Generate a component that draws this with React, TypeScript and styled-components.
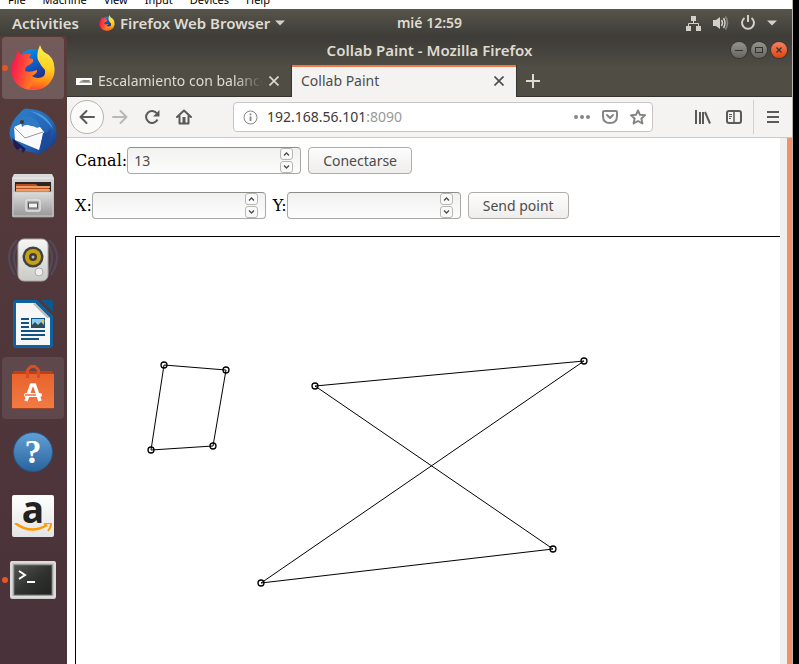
import React from "react";
import styled, { createGlobalStyle, css } from "styled-components";

const GlobalStyle = createGlobalStyle`
  * { box-sizing: border-box; }
  body { margin: 0; background: #000; }
  button, input { font: inherit; color: inherit; margin: 0; }
  button { padding: 0; border: 0; background: none; }
  svg { display: block; flex: none; }
`;

const Screen = styled.div`
  height: 100vh;
  margin-right: 6px;
  border-right: 1px solid #b9b6b2;
  display: flex;
  flex-direction: column;
  overflow: hidden;
  background: #fff;
  font: 14px/18px "Noto Sans", "Open Sans", sans-serif;
`;

const HostMenu = styled.nav`
  flex: none;
  height: 9px;
  padding-left: 8px;
  display: flex;
  align-items: flex-end;
  gap: 17px;
  overflow: hidden;
  background: #fff;
  color: #000;
  font: 11px/18px "Noto Sans", "Open Sans", sans-serif;
`;

const HostItem = styled.button`
  flex: none;
`;

const TopBar = styled.header`
  flex: none;
  height: 27px;
  padding: 0 15px 0 12px;
  display: grid;
  grid-template-columns: 11fr auto 9fr;
  align-items: center;
  background: linear-gradient(#57544b, #3e3d38);
  color: #dfdbd2;
  font-weight: 600;
`;

const TopGroup = styled.div<{ $end?: boolean }>`
  display: flex;
  align-items: center;
  gap: ${(p) => (p.$end ? "11px" : "20px")};
  justify-content: ${(p) => (p.$end ? "flex-end" : "flex-start")};
  font-size: 15px;
`;

const TopButton = styled.button`
  display: flex;
  align-items: center;
  gap: 5px;
  white-space: nowrap;
`;

const Desktop = styled.div`
  flex: 1;
  min-height: 0;
  display: flex;
`;

const Dock = styled.nav`
  flex: none;
  width: 67px;
  padding: 1px 3px 0 2px;
  display: flex;
  flex-direction: column;
  gap: 2px;
  background: linear-gradient(#573c3a, #50373b 45%, #49323a);
`;

const DockTile = styled.button<{ $shade?: number }>`
  flex: none;
  height: 62px;
  border-radius: 4px;
  display: grid;
  place-items: center;
  position: relative;
  background: rgba(255, 255, 255, ${(p) => p.$shade ?? 0});
`;

const RunningDot = styled.span`
  position: absolute;
  left: 0;
  top: 28px;
  width: 6px;
  height: 6px;
  border-radius: 50%;
  background: #e95420;
`;

const Window = styled.main`
  flex: 1;
  min-width: 0;
  display: flex;
  flex-direction: column;
`;

const Chrome = styled.div`
  flex: none;
  background: linear-gradient(#3d3b37, #504d45 32px);
  color: #dfdbd2;
`;

const TitleBar = styled.div`
  height: 29px;
  padding: 0 5px 2px 61px;
  display: flex;
  align-items: center;
`;

const WindowTitle = styled.h1`
  flex: 1;
  margin: 0;
  text-align: center;
  font-size: 15px;
  line-height: 18px;
  font-weight: 600;
`;

const WindowButtons = styled.div`
  display: flex;
  gap: 4px;
`;

const RoundButton = styled.button<{ $close?: boolean }>`
  width: 16px;
  height: 16px;
  border-radius: 50%;
  display: grid;
  place-items: center;
  color: #35332e;
  box-shadow: 0 0 0 1px #383630;
  background: ${(p) =>
    p.$close ? "linear-gradient(#f58163, #e1440f)" : "linear-gradient(#95938c, #666560)"};
`;

const TabStrip = styled.div`
  height: 32px;
  display: flex;
`;

const Tab = styled.div<{ $active?: boolean }>`
  flex: none;
  width: ${(p) => (p.$active ? "226px" : "224px")};
  display: flex;
  align-items: center;
  gap: 6px;
  padding: 0 12px 0 9px;
  border-bottom: 1px solid #35332e;
  ${(p) =>
    p.$active &&
    css`
      border-bottom: 0;
      border-left: 1px solid #35332e;
      border-right: 1px solid #35332e;
      box-shadow: inset 0 2px #f07746;
      background: #f4f3f2;
      color: #4c4c4c;
    `}
`;

const TabLabel = styled.span<{ $fade?: boolean }>`
  flex: 1;
  min-width: 0;
  overflow: hidden;
  white-space: nowrap;
  ${(p) =>
    p.$fade &&
    css`
      mask-image: linear-gradient(to left, transparent 0, #000 28px);
    `}
`;

const StripRest = styled.div`
  flex: 1;
  display: flex;
  align-items: center;
  padding-left: 9px;
  border-bottom: 1px solid #35332e;
`;

const Toolbar = styled.div`
  flex: none;
  height: 41px;
  display: flex;
  align-items: center;
  padding: 0 13px 0 3px;
  background: #f4f3f2;
  border-bottom: 1px solid #cbc8c5;
  color: #5a5a58;
`;

const ToolGroup = styled.div<{ $gap: number }>`
  flex: none;
  display: flex;
  align-items: center;
  gap: ${(p) => p.$gap}px;
`;

const ToolButton = styled.button<{ $round?: boolean; $dim?: boolean }>`
  display: grid;
  place-items: center;
  ${(p) =>
    p.$round &&
    css`
      width: 34px;
      height: 34px;
      border-radius: 50%;
      border: 1px solid #b5b2af;
      background: #fbfbfa;
    `}
  ${(p) =>
    p.$dim &&
    css`
      color: #b9b8b6;
    `}
`;

const UrlBar = styled.div`
  flex: 1;
  min-width: 0;
  height: 30px;
  margin: 0 42px 0 41px;
  padding: 0 6px 0 9px;
  display: flex;
  align-items: center;
  gap: 9px;
  border: 1px solid #c8c5c2;
  border-radius: 4px;
  background: #fff;
  color: #858583;
`;

const Address = styled.div`
  flex: 1;
  min-width: 0;
  color: #9a9996;
`;

const Host = styled.span`
  color: #3a3a3a;
`;

const MenuDivider = styled.span`
  width: 1px;
  height: 34px;
  margin: 0 13px 0 11px;
  background: #d2d0ce;
`;

const Viewport = styled.div`
  flex: 1;
  min-height: 0;
  display: flex;
  background: #fff;
`;

const Page = styled.div`
  flex: 1;
  min-width: 0;
  overflow: hidden;
  padding: 9px 0 0 8px;
  color: #000;
  font: 16px/19px "DejaVu Serif", serif;
`;

const ScrollTrack = styled.div`
  flex: none;
  width: 12px;
  background: #f1f0ef;
  border-right: 5px solid #f19169;
`;

const FormRow = styled.form`
  display: flex;
  align-items: center;
  margin-bottom: 17px;
  & + & { margin-top: 18px; }
`;

const Field = styled.label`
  display: flex;
  align-items: center;
  margin-right: 7px;
`;

const Spin = styled.span`
  width: 174px;
  height: 27px;
  padding: 0 7px 0 6px;
  display: flex;
  align-items: center;
  border: 1px solid #aaa8a5;
  border-top-color: #8f8d8a;
  border-radius: 4px;
  background: linear-gradient(#f1f1f0, #fdfdfd);
`;

const NumberInput = styled.input`
  flex: 1;
  min-width: 0;
  padding: 0;
  border: 0;
  outline: 0;
  background: none;
  color: #4c4c4c;
  font: 14px/18px "Noto Sans", sans-serif;
  appearance: textfield;
  &::-webkit-inner-spin-button { appearance: none; }
`;

const Steppers = styled.span`
  display: flex;
  flex-direction: column;
  gap: 1px;
`;

const StepButton = styled.button`
  width: 13px;
  height: 12px;
  display: grid;
  place-items: center;
  border: 1px solid #b9b7b4;
  border-radius: 3px;
  background: #fafafa;
  color: #4c4c4c;
`;

const PushButton = styled.button`
  height: 27px;
  padding: 0 14px;
  border: 1px solid #b0adaa;
  border-radius: 4px;
  background: linear-gradient(#fdfdfd, #eeedeb);
  color: #4c4c4c;
  font: 14px/18px "Noto Sans", sans-serif;
`;

const Drawing = styled.svg`
  border: 1px solid #000;
`;

function FirefoxIcon({ size }: { size: number }) {
  const id = "fx" + size;
  return (
    <svg width={size} height={size} viewBox="0 0 46 46" aria-hidden="true">
      <defs>
        <linearGradient id={id + "a"} x1="0" y1="0.3" x2="1" y2="0.5">
          <stop offset="0" stopColor="#f5144f" />
          <stop offset="0.25" stopColor="#ff3b3f" />
          <stop offset="0.55" stopColor="#ff7a22" />
          <stop offset="1" stopColor="#ffbd16" />
        </linearGradient>
        <linearGradient id={id + "b"} x1="0" y1="0" x2="0.5" y2="1">
          <stop offset="0" stopColor="#00a7ee" />
          <stop offset="0.5" stopColor="#0b5fd0" />
          <stop offset="1" stopColor="#2c2178" />
        </linearGradient>
        <linearGradient id={id + "c"} x1="0.4" y1="0" x2="0.3" y2="1">
          <stop offset="0" stopColor="#fff14a" />
          <stop offset="0.5" stopColor="#ffce20" />
          <stop offset="0.8" stopColor="#ff8b14" />
          <stop offset="1" stopColor="#ff4a30" />
        </linearGradient>
      </defs>
      <circle cx="24" cy="22" r="18" fill={`url(#${id}b)`} />
      <path
        d="M7 5 L11 10 Q16 8 21 9 L19 13 L23 14 L23 17 Q20 20 17 21 Q15 23 15 26 Q20 28 27 25 Q28 28 22 31 Q28 35 34 31 Q38 24 34 17 Q42 22 44 27 Q41 43 24 45 Q5 45 1 27 Q1 17 6 12 Z"
        fill={`url(#${id}a)`}
      />
      <path
        d="M30 0 Q26 9 28 15 Q31 21 35 25 Q36 34 28 36 Q22 38 19 44.500 Q38 47 44 30 Q47 13 34 7 Q31 4 30 0 Z"
        fill={`url(#${id}c)`}
      />
    </svg>
  );
}

function ThunderbirdIcon() {
  return (
    <svg width="50" height="50" viewBox="0 0 50 50" aria-hidden="true">
      <defs>
        <linearGradient id="tb" x1="0" y1="0" x2="1" y2="1">
          <stop offset="0" stopColor="#2b84cb" />
          <stop offset="0.6" stopColor="#2465b6" />
          <stop offset="1" stopColor="#172c74" />
        </linearGradient>
      </defs>
      <path
        d="M12 6 Q16 0 21 2 Q37 2 46 16 Q50 25 48 34 L44 40 L44 37 L38 45 L37 42 L31 48 L26 46 L10 42 L5 36 L3 32 Q0 26 3 19 Q6 11 12 6 Z"
        fill="url(#tb)"
      />
      <path d="M4 31 L6 39 L9 43 L13 41 L15 46 L18 42 Z" fill="#211c53" />
      <path d="M6 20 L15 16 L23 19 L32 20 L36 25 L31 43 L7 33 Z" fill="#fafafa" />
      <path d="M6 20 L17 31 L35 25" fill="none" stroke="#9b9b9b" />
      <path d="M12 11 Q22 7 29 14 Q34 20 29 21 Q19 15 14 20 Z" fill="#3079c4" />
      <path d="M35 26 Q40 27 43 22 Q43 36 32 46 L33 36 Z" fill="#1c4a9d" />
      <path d="M22 4 Q40 7 45 22 Q36 10 22 4" fill="#4a96d8" />
      <circle cx="14" cy="15" r="2" fill="#4a371e" />
    </svg>
  );
}

function FilesIcon() {
  return (
    <svg width="44" height="46" viewBox="0 0 44 46" aria-hidden="true">
      <defs>
        <linearGradient id="fc" x1="0" y1="0" x2="0" y2="1">
          <stop offset="0" stopColor="#dcdcdc" />
          <stop offset="1" stopColor="#999" />
        </linearGradient>
      </defs>
      <path d="M3 1 H41 L43 5 V44 H1 V5 Z" fill="url(#fc)" />
      <path d="M2 5 H42" stroke="#eee" />
      <rect x="4" y="9" width="36" height="11" fill="#292624" />
      <path d="M5 11 H25 L27 13 H38 V20 H5 Z" fill="#b94d20" />
      <path d="M5 14 H39 M5 17 H39" stroke="#f6bc80" strokeWidth="1.5" />
      <path d="M2 19 H42 V43 H2 Z" fill="url(#fc)" stroke="#c9c9c9" />
      <rect x="15" y="27" width="14" height="11" rx="2" fill="#aaa" stroke="#e2e2e2" strokeWidth="1.5" />
      <rect x="17.500" y="30" width="9" height="5" fill="#f3f3f3" stroke="#555" />
      <path d="M2 44.500 H42" stroke="#686868" />
    </svg>
  );
}

function MusicIcon() {
  return (
    <svg width="52" height="46" viewBox="0 0 52 46" aria-hidden="true">
      <defs>
        <linearGradient id="rb" x1="0" y1="0" x2="0" y2="1">
          <stop offset="0" stopColor="#f7f7f5" />
          <stop offset="1" stopColor="#c9c9c5" />
        </linearGradient>
      </defs>
      <g fill="none" stroke="#566690" strokeWidth="2" opacity="0.4">
        <path d="M10 3 Q-5 17 8 38 M13 5 Q2 18 11 36 M42 3 Q57 17 44 38 M39 5 Q50 18 41 36" />
      </g>
      <rect x="11" y="2" width="30" height="42" rx="6" fill="url(#rb)" stroke="#aaa9a5" />
      <circle cx="26" cy="20" r="10.500" fill="#43423e" />
      <circle cx="26" cy="20" r="8" fill="#c6a113" />
      <circle cx="26" cy="20" r="4" fill="#3c3c3c" />
      <circle cx="26" cy="20" r="1.500" fill="#bbb" />
      <circle cx="32" cy="35" r="4" fill="#eee" stroke="#aaa" />
      <circle cx="18" cy="36" r="2" fill="none" stroke="#d0d0cc" />
    </svg>
  );
}

function WriterIcon() {
  return (
    <svg width="40" height="48" viewBox="0 0 40 48" aria-hidden="true">
      <path d="M3 0 H24 L40 16 V45 Q40 48 37 48 H3 Q0 48 0 45 V3 Q0 0 3 0 Z" fill="#0d639f" />
      <path d="M28 0 H38 Q40 0 40 2 V12 Z" fill="#0c578d" />
      <path d="M3 3 H22 L37 18 V45 H3 Z" fill="#f6f6f6" />
      <path d="M22 3 L37 18 H34 L20 4 Z" fill="#bbb" />
      <path d="M8 19 H16 M8 23 H16 M8 27 H16 M8 31 H32 M8 35 H32 M8 39 H26" stroke="#125384" strokeWidth="2" />
      <rect x="18" y="18" width="14" height="10" fill="#0d5288" />
      <rect x="19" y="19" width="12" height="8" fill="#8cccec" />
      <path d="M19 27 V25 L22 22 L25 25 L28 22 L31 25 V27 Z" fill="#344e54" />
      <circle cx="30" cy="21" r="1.500" fill="#f6c12e" />
    </svg>
  );
}

function SoftwareIcon() {
  return (
    <svg width="42" height="46" viewBox="0 0 42 46" aria-hidden="true">
      <defs>
        <linearGradient id="sw" x1="0" y1="0" x2="0" y2="1">
          <stop offset="0" stopColor="#e8632d" />
          <stop offset="1" stopColor="#f37a43" />
        </linearGradient>
      </defs>
      <path d="M2 6 H40 L42 10 H0 Z" fill="#c53e13" />
      <rect y="9" width="42" height="34" fill="url(#sw)" />
      <path d="M15.500 13 V5 L19 1.500 H23 L26.500 5 V13" fill="none" stroke="#d94e20" strokeWidth="3" />
      <path d="M14 36 L19.500 20 H22.500 L28 36" fill="none" stroke="#fff" strokeWidth="3.500" />
      <rect x="12" y="28" width="18" height="4" rx="2" fill="#fff" />
      <path d="M13 30 H24" stroke="#ef6f38" strokeWidth="1.500" />
      <path d="M0 43.500 H42" stroke="#9c4429" />
    </svg>
  );
}

const HelpDisc = styled.span`
  width: 40px;
  height: 40px;
  border-radius: 50%;
  display: grid;
  place-items: center;
  background: linear-gradient(#629fd3, #2a649f);
  border: 1px solid #245c95;
  color: #fff;
  font: bold 34px/38px "Liberation Serif", serif;
`;

const AmazonCard = styled.span`
  width: 42px;
  height: 42px;
  border-radius: 2px;
  display: grid;
  justify-items: center;
  align-content: start;
  background: linear-gradient(#fff, #e4e4e4);
  color: #222;
  font: bold 37px/28px "Open Sans", sans-serif;
`;

function TerminalIcon() {
  return (
    <svg width="46" height="38" viewBox="0 0 46 38" aria-hidden="true">
      <defs>
        <linearGradient id="tm" x1="0" y1="0" x2="1" y2="1">
          <stop offset="0" stopColor="#535650" />
          <stop offset="0.5" stopColor="#30332f" />
          <stop offset="1" stopColor="#222" />
        </linearGradient>
      </defs>
      <rect width="46" height="38" rx="2" fill="#c9c9c7" />
      <rect x="1" y="1" width="44" height="35" rx="1" fill="none" stroke="#eee" />
      <rect x="4" y="4" width="38" height="30" fill="url(#tm)" stroke="#70716e" />
      <path d="M9 10 L15 14 L9 18" fill="none" stroke="#fff" strokeWidth="2" />
      <path d="M17 21 H25" stroke="#fff" strokeWidth="2" />
    </svg>
  );
}

function Caret() {
  return (
    <svg width="10" height="6" viewBox="0 0 10 6" aria-hidden="true">
      <path d="M0 0.500 H10 L5 5.500 Z" fill="#d3d0c8" />
    </svg>
  );
}

function Cross() {
  return (
    <svg width="10" height="10" viewBox="0 0 10 10" aria-hidden="true">
      <path d="M0.500 0.500 L9.500 9.500 M9.500 0.500 L0.500 9.500" stroke="currentColor" strokeWidth="1.600" />
    </svg>
  );
}

function Glyph({ d, width = 16, stroke = 2 }: { d: string; width?: number; stroke?: number }) {
  return (
    <svg width={width} height="16" viewBox={`0 0 ${width} 16`} fill="none" stroke="currentColor"
      strokeWidth={stroke} strokeLinecap="round" strokeLinejoin="round" aria-hidden="true">
      <path d={d} />
    </svg>
  );
}

function SpinField({ label, initial = "" }: { label: string; initial?: string }) {
  const [value, setValue] = React.useState(initial);
  const step = (by: number) => setValue(String(Number(value) + by));
  return (
    <Field>
      {label}
      <Spin>
        <NumberInput type="number" value={value} onChange={(e) => setValue(e.target.value)} />
        <Steppers>
          <StepButton type="button" aria-label={label + " increase"} onClick={() => step(1)}>
            <svg width="7" height="4" viewBox="0 0 7 4"><path d="M1 3.500 L3.500 1 L6 3.500" fill="none" stroke="currentColor" strokeWidth="1.300" /></svg>
          </StepButton>
          <StepButton type="button" aria-label={label + " decrease"} onClick={() => step(-1)}>
            <svg width="7" height="4" viewBox="0 0 7 4"><path d="M1 0.500 L3.500 3 L6 0.500" fill="none" stroke="currentColor" strokeWidth="1.300" /></svg>
          </StepButton>
        </Steppers>
      </Spin>
    </Field>
  );
}

const polygons = [
  [[88, 128], [150, 133], [137, 209], [75, 213]],
  [[239, 149], [508, 124], [185, 346], [477, 312]],
];

const dockItems = [
  { name: "Firefox", icon: <FirefoxIcon size={46} />, shade: 0.16, running: true },
  { name: "Thunderbird", icon: <ThunderbirdIcon /> },
  { name: "Files", icon: <FilesIcon /> },
  { name: "Rhythmbox", icon: <MusicIcon /> },
  { name: "Writer", icon: <WriterIcon /> },
  { name: "Software", icon: <SoftwareIcon />, shade: 0.09 },
  { name: "Help", icon: <HelpDisc>?</HelpDisc> },
  {
    name: "Amazon",
    icon: (
      <AmazonCard>
        a
        <svg width="38" height="10" viewBox="0 0 38 10">
          <path d="M1 0 Q17 12 33 2" fill="none" stroke="#ff9900" strokeWidth="2.500" />
          <path d="M30 1 Q37 -1 37 1 Q37 4 34 8" fill="none" stroke="#ff9900" strokeWidth="2" />
        </svg>
      </AmazonCard>
    ),
  },
  { name: "Terminal", icon: <TerminalIcon />, running: true },
];

export default function App() {
  const stop = (e: React.FormEvent) => e.preventDefault();
  return (
    <>
      <GlobalStyle />
      <Screen>
        <HostMenu>
          {["File", "Machine", "View", "Input", "Devices", "Help"].map((item) => (
            <HostItem key={item}>{item}</HostItem>
          ))}
        </HostMenu>
        <TopBar>
          <TopGroup>
            <TopButton>Activities</TopButton>
            <TopButton>
              <FirefoxIcon size={16} />
              Firefox Web Browser
              <Caret />
            </TopButton>
          </TopGroup>
          <TopButton>mié 12:59</TopButton>
          <TopGroup $end>
            <svg width="16" height="16" viewBox="0 0 16 16" fill="#d3d0c8" aria-label="Network">
              <path d="M5 1 H10 V6 H5 Z M0 11 H5 V16 H0 Z M10 11 H15 V16 H10 Z" />
              <path d="M7.500 6 V8.500 M2.500 11 V8.500 H12.500 V11" fill="none" stroke="#d3d0c8" />
            </svg>
            <svg width="16" height="16" viewBox="0 0 16 16" fill="none" stroke="#d3d0c8" strokeWidth="1.500" aria-label="Volume">
              <path d="M0 5 H3 L7 2 V14 L3 11 H0 Z" fill="#d3d0c8" stroke="none" />
              <path d="M8.500 5 Q10.500 8 8.500 11 M10.500 3 Q13.500 8 10.500 13" />
              <path d="M12.500 1.500 Q16.500 8 12.500 14.500" stroke="#898680" />
            </svg>
            <svg width="16" height="16" viewBox="0 0 16 16" fill="none" stroke="#d3d0c8" strokeWidth="2" aria-label="Power">
              <path d="M8 0 V7 M4.500 3 A6 6 0 1 0 11.500 3" />
            </svg>
            <Caret />
          </TopGroup>
        </TopBar>
        <Desktop>
          <Dock>
            {dockItems.map((item) => (
              <DockTile key={item.name} $shade={item.shade} aria-label={item.name}>
                {item.icon}
                {item.running && <RunningDot />}
              </DockTile>
            ))}
          </Dock>
          <Window>
            <Chrome>
              <TitleBar>
                <WindowTitle>Collab Paint - Mozilla Firefox</WindowTitle>
                <WindowButtons>
                  <RoundButton aria-label="Minimize">
                    <svg width="8" height="8"><path d="M0 4.500 H8" stroke="currentColor" /></svg>
                  </RoundButton>
                  <RoundButton aria-label="Maximize">
                    <svg width="8" height="6"><rect x="0.500" y="0.500" width="7" height="5" fill="none" stroke="currentColor" /></svg>
                  </RoundButton>
                  <RoundButton $close aria-label="Close window">
                    <svg width="6" height="6"><path d="M0.500 0.500 L5.500 5.500 M5.500 0.500 L0.500 5.500" stroke="currentColor" strokeWidth="1.300" /></svg>
                  </RoundButton>
                </WindowButtons>
              </TitleBar>
              <TabStrip>
                <Tab>
                  <svg width="16" height="16" viewBox="0 0 16 16" aria-hidden="true">
                    <rect y="5" width="16" height="7" fill="#fff" />
                    <path d="M3 10 Q5 6 9 7 L14 7 L15 10 Z" fill="#a9aba5" />
                    <path d="M7 8 H13" stroke="#5f625d" />
                  </svg>
                  <TabLabel $fade>Escalamiento con balanceo</TabLabel>
                  <ToolButton aria-label="Close tab"><Cross /></ToolButton>
                </Tab>
                <Tab $active>
                  <TabLabel>Collab Paint</TabLabel>
                  <ToolButton aria-label="Close tab"><Cross /></ToolButton>
                </Tab>
                <StripRest>
                  <ToolButton aria-label="New tab">
                    <svg width="14" height="14"><path d="M7 0 V14 M0 7 H14" stroke="currentColor" strokeWidth="2" /></svg>
                  </ToolButton>
                </StripRest>
              </TabStrip>
            </Chrome>
            <Toolbar>
              <ToolGroup $gap={16}>
                <ToolGroup $gap={8}>
                  <ToolButton $round aria-label="Back"><Glyph d="M15 8 H1.500 M7.500 2 L1.500 8 L7.500 14" /></ToolButton>
                  <ToolButton $dim aria-label="Forward"><Glyph d="M1 8 H14.500 M8.500 2 L14.500 8 L8.500 14" /></ToolButton>
                </ToolGroup>
                <ToolButton aria-label="Reload">
                  <svg width="16" height="16" viewBox="0 0 16 16" aria-hidden="true">
                    <path d="M13 4.500 A6 6 0 1 0 13.500 10.500" fill="none" stroke="currentColor" strokeWidth="2" />
                    <path d="M15.500 1 V7.500 H9 Z" fill="currentColor" />
                  </svg>
                </ToolButton>
                <ToolButton aria-label="Home">
                  <svg width="16" height="16" viewBox="0 0 16 16" aria-hidden="true">
                    <path d="M1 8 L8 1.500 L15 8 M3.500 7 V14.500 H12.500 V7" fill="none" stroke="currentColor" strokeWidth="2" strokeLinecap="round" strokeLinejoin="round" />
                    <path d="M6.500 8 H9.500 V14 H6.500 Z" fill="currentColor" />
                  </svg>
                </ToolButton>
              </ToolGroup>
              <UrlBar>
                <svg width="15" height="15" viewBox="0 0 15 15" aria-label="Site information">
                  <circle cx="7.500" cy="7.500" r="6.500" fill="none" stroke="currentColor" />
                  <path d="M7.500 6.500 V11 M7.500 3.500 V5.200" stroke="currentColor" strokeWidth="1.800" />
                </svg>
                <Address><Host>192.168.56.101</Host>:8090</Address>
                <ToolGroup $gap={12}>
                  <ToolButton aria-label="Page actions">
                    <svg width="16" height="16" fill="currentColor"><circle cx="2" cy="8" r="2" /><circle cx="8" cy="8" r="2" /><circle cx="14" cy="8" r="2" /></svg>
                  </ToolButton>
                  <ToolButton aria-label="Pocket"><Glyph d="M2 2 H14 Q15 2 15 3 V7 Q15 14 8 14 Q1 14 1 7 V3 Q1 2 2 2 M5 6 L8 9 L11 6" /></ToolButton>
                  <ToolButton aria-label="Bookmark"><Glyph d="M8 1.500 L10 5.800 L15 6.300 L11.400 9.500 L12.400 14.500 L8 12 L3.600 14.500 L4.600 9.500 L1 6.300 L6 5.800 Z" /></ToolButton>
                </ToolGroup>
              </UrlBar>
              <ToolGroup $gap={15}>
                <ToolButton aria-label="Library">
                  <svg width="16" height="14" fill="none" stroke="currentColor" strokeWidth="2"><path d="M1 0 V14 M5 2 V14 M8 2 V14 M10 2 L15 13.500" /></svg>
                </ToolButton>
                <ToolButton aria-label="Sidebar">
                  <svg width="16" height="14" fill="none" stroke="currentColor"><rect x="1" y="1" width="14" height="12" rx="2" strokeWidth="2" /><path d="M8 1 V13" strokeWidth="1.500" /><path d="M3 4.500 H6 M3 6.500 H6 M3 8.500 H5" /></svg>
                </ToolButton>
              </ToolGroup>
              <MenuDivider />
              <ToolButton aria-label="Menu">
                <svg width="12" height="12"><path d="M0 1 H12 M0 6 H12 M0 11 H12" stroke="currentColor" strokeWidth="2" /></svg>
              </ToolButton>
            </Toolbar>
            <Viewport>
              <Page>
                <FormRow onSubmit={stop}>
                  <SpinField label="Canal:" initial="13" />
                  <PushButton>Conectarse</PushButton>
                </FormRow>
                <FormRow onSubmit={stop}>
                  <SpinField label="X:" />
                  <SpinField label="Y:" />
                  <PushButton>Send point</PushButton>
                </FormRow>
                <Drawing width="1024" height="600" fill="none" stroke="#000" role="img" aria-label="Drawing">
                  {polygons.map((points, i) => (
                    <g key={i}>
                      <polygon points={points.map((p) => p.join(",")).join(" ")} />
                      {points.map(([x, y]) => <circle key={x} cx={x} cy={y} r="3" strokeWidth="1.300" />)}
                    </g>
                  ))}
                </Drawing>
              </Page>
              <ScrollTrack />
            </Viewport>
          </Window>
        </Desktop>
      </Screen>
    </>
  );
}
